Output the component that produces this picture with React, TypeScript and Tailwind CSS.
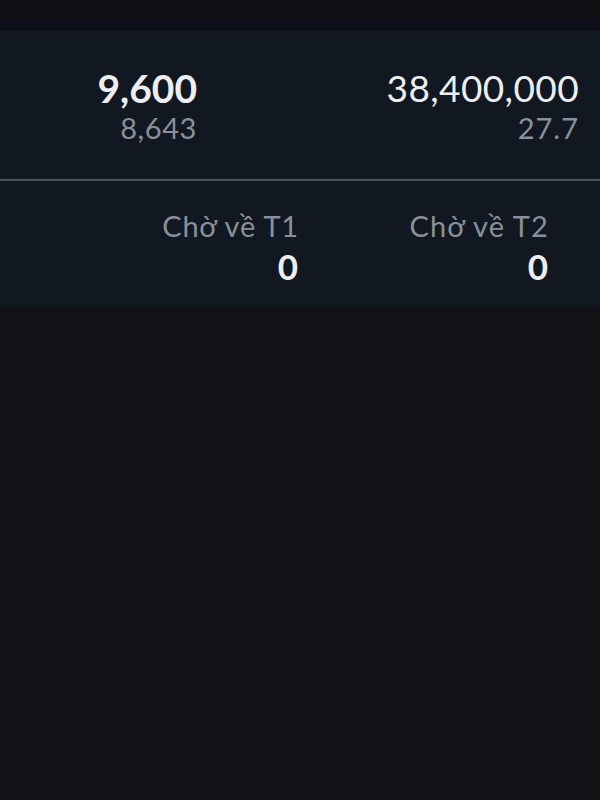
export default function App() {
    return (
        <div className="h-[800px] w-[600px] bg-[#111216] font-['Lato',sans-serif]">
            <div className="h-[20px] bg-[#101115]" />
            <div className="h-[11px] bg-[#0d1019]" />
            <div className="bg-[#111822]">
                <div className="flex h-[147px] items-start pt-[37px]">
                    <div className="flex w-[197px] flex-col items-end">
                        <span className="text-[39px] leading-[40px] font-bold text-[#eceef0]">9,600</span>
                        <span className="mt-[4px] text-[29px] leading-[32px] tracking-[0.6px] text-[#8a909a]">8,643</span>
                    </div>
                    <div className="flex w-[382px] flex-col items-end">
                        <span className="text-[37px] leading-[40px] tracking-[0.4px] text-[#eceef0]">38,400,000</span>
                        <span className="mt-[4px] text-[29px] leading-[32px] tracking-[1px] text-[#8a909a]">27.7</span>
                    </div>
                </div>
                <div className="h-px bg-[#1a2029]" />
                <div className="h-[2px] bg-[#4c535c]" />
                <div className="flex h-[126px] items-start pt-[29px]">
                    <div className="flex w-[299px] flex-col items-end">
                        <span className="text-[29px] leading-[32px] tracking-[0.8px] text-[#8a909a]">Chờ về T1</span>
                        <span className="mt-[4px] mr-[1px] text-[35px] leading-[40px] font-bold text-[#eceef0]">0</span>
                    </div>
                    <div className="flex w-[250px] flex-col items-end">
                        <span className="text-[29px] leading-[32px] tracking-[1.1px] text-[#8a909a]">Chờ về T2</span>
                        <span className="mt-[4px] mr-[1px] text-[35px] leading-[40px] font-bold text-[#eceef0]">0</span>
                    </div>
                </div>
            </div>
        </div>
    );
}
